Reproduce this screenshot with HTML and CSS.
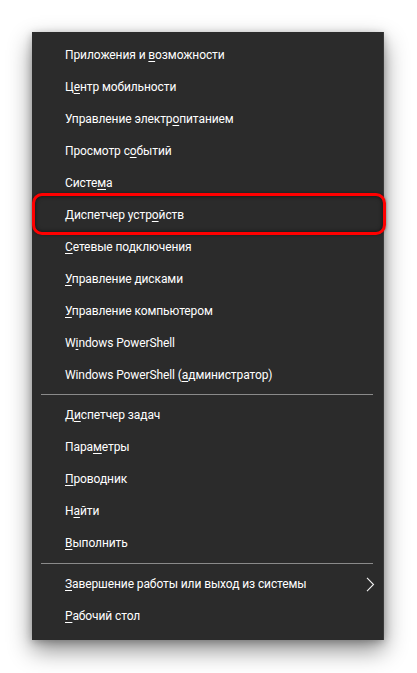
FILE: index.html
```html
<!DOCTYPE html>
<html lang="ru">
<head>
<meta charset="utf-8">
<link rel="stylesheet" href="styles.css">
</head>
<body>
<div class="menu">
  <div class="group">
    <div class="item">Приложения и <u>в</u>озможности</div>
    <div class="item">Ц<u>е</u>нтр мобильности</div>
    <div class="item">Управление электр<u>о</u>питанием</div>
    <div class="item">Просмотр с<u>о</u>бытий</div>
    <div class="item">Систе<u>м</u>а</div>
    <div class="item highlighted">Диспетчер устр<u>о</u>йств<span class="ring"></span></div>
    <div class="item"><u>С</u>етевые подключения</div>
    <div class="item"><u>У</u>правление дисками</div>
    <div class="item"><u>У</u>правление компьютером</div>
    <div class="item">W<u>i</u>ndows PowerShell</div>
    <div class="item">Windows PowerShell (<u>а</u>дминистратор)</div>
  </div>
  <div class="sep"></div>
  <div class="group">
    <div class="item">Д<u>и</u>спетчер задач</div>
    <div class="item">Пара<u>м</u>етры</div>
    <div class="item"><u>П</u>роводник</div>
    <div class="item">Н<u>а</u>йти</div>
    <div class="item"><u>В</u>ыполнить</div>
  </div>
  <div class="sep sep2"></div>
  <div class="group">
    <div class="item sub"><span><u>З</u>авершение работы или выход из системы</span>
      <svg class="chev" width="9" height="15" viewBox="0 0 9 15"><path d="M1 0.8 L7.5 7.5 L1 14.2" fill="none" stroke="#f2f2f2" stroke-width="1.1"/></svg>
    </div>
    <div class="item"><u>Р</u>абочий стол</div>
  </div>
</div>
</body>
</html>
```
FILE: styles.css
```css
html, body {
  margin: 0;
  padding: 0;
  background: #ffffff;
}
body {
  width: 417px;
  height: 673px;
  overflow: hidden;
  font-family: Roboto, "Noto Sans", sans-serif;
}
.menu {
  margin: 32px 0 0 32px;
  width: 352px;
  box-sizing: border-box;
  padding: 7px 0 8px;
  background: #2b2b2b;
  box-shadow: 0 10px 22px rgba(0, 0, 0, 0.45), 0 2px 8px rgba(0, 0, 0, 0.25);
  border-right: 1px solid #3a3a3a;
}
.item {
  position: relative;
  height: 32px;
  line-height: 32px;
  padding-left: 33px;
  padding-right: 8px;
  color: #ffffff;
  font-size: 12px;
  letter-spacing: -0.1px;
  white-space: nowrap;
}
.item u {
  text-decoration-thickness: 1px;
  text-underline-offset: 2px;
}
.item.sub {
  display: flex;
  align-items: center;
  justify-content: space-between;
}
.chev {
  display: block;
  margin-top: 1px;
}
.ring {
  position: absolute;
  left: 0;
  right: -3px;
  top: -6px;
  bottom: -4px;
  border: 3px solid #ff0000;
  border-radius: 10px;
  box-shadow: inset 0 0 4px rgba(0, 0, 0, 0.6), 0 0 3px rgba(0, 0, 0, 0.4);
}
.sep {
  height: 1px;
  margin: 3px 10px 4px 9px;
  background: #8a8a8a;
}
.sep2 {
  margin-top: 4px;
  margin-bottom: 4px;
}
```
